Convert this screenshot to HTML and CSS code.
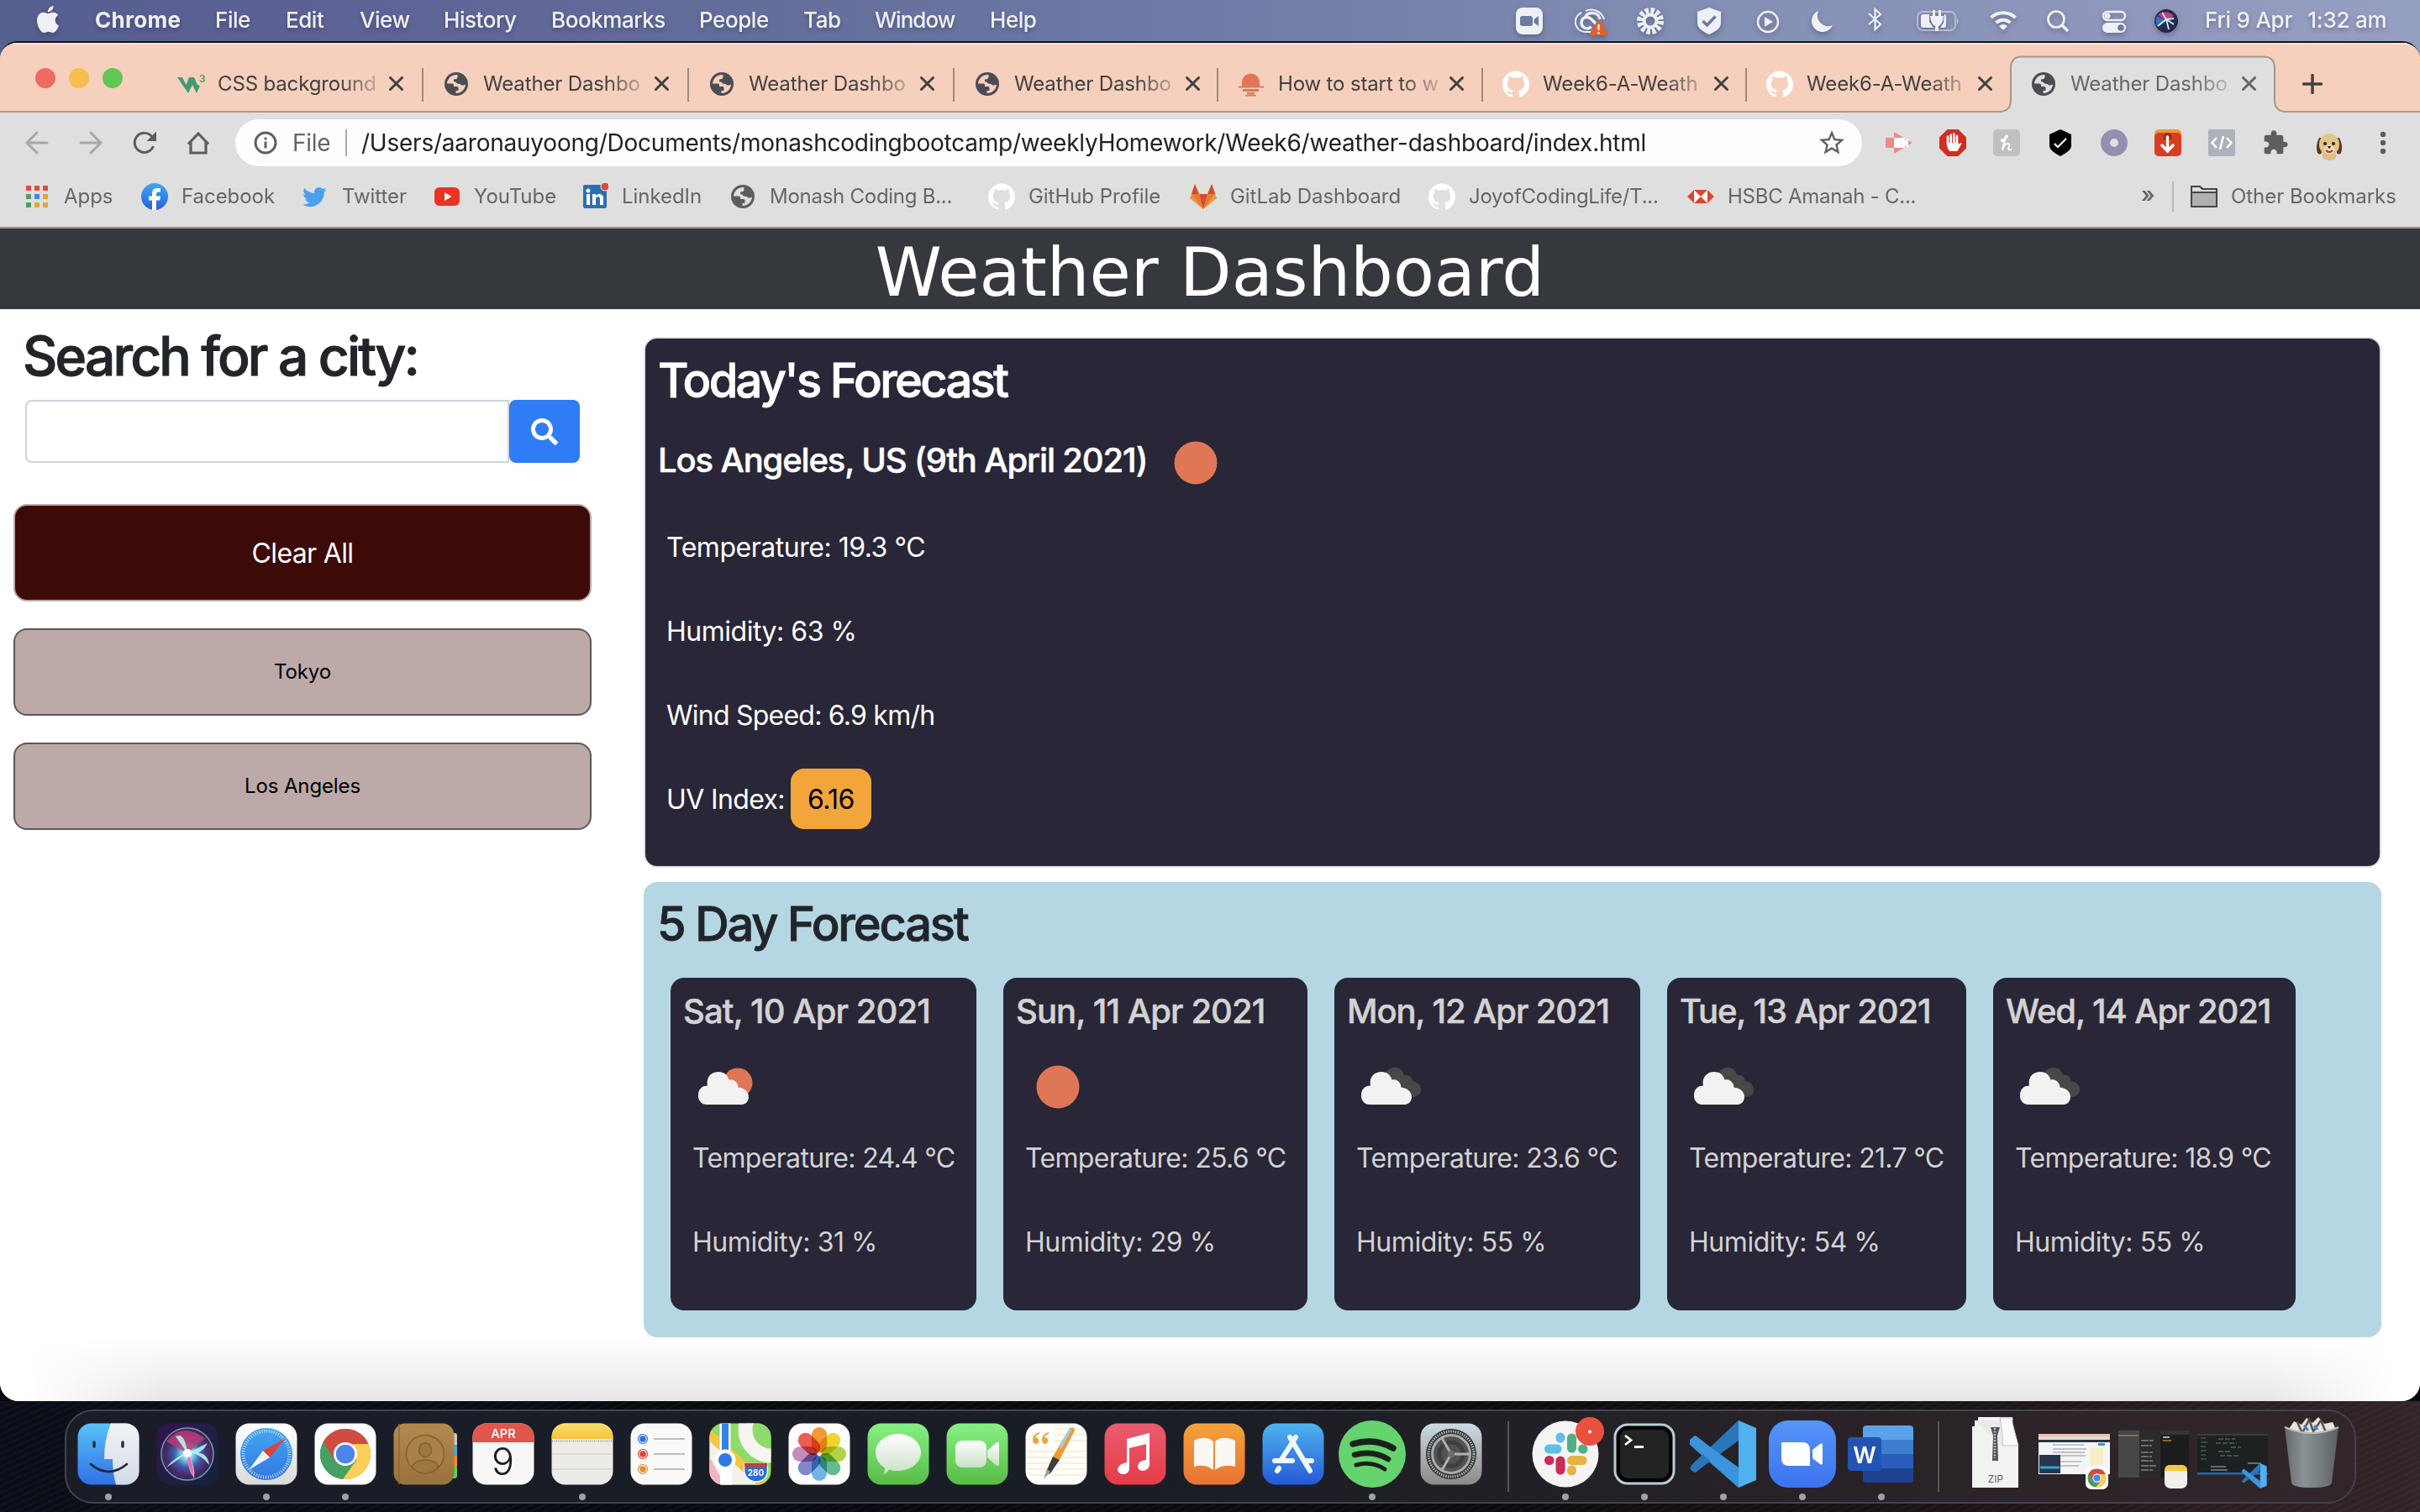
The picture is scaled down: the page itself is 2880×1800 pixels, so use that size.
FILE: index.html
```html
<!DOCTYPE html>
<html lang="en">
<head>
<meta charset="utf-8">
<title>Weather Dashboard</title>
<link rel="stylesheet" href="styles.css">
</head>
<body>
<svg class="defs" aria-hidden="true">
  <defs>
    <symbol id="globe" viewBox="0 0 32 32"><circle cx="16" cy="16" r="14" fill="currentColor"/><path d="M17.500 5C10.500 4.500 5.500 9.500 5 15.500h6.500q1.500 0 1.500 1.500v2h4q1.500 0 1.500 1.500V24h-3v3c6.500 0 11-4.500 11.500-10.500-2 1.500-5 1.500-6.500-.5l-3.500-.5q-1-2.500-4-2.500v-2.500q4 0 4.500-2.500z" class="globe-land"/></symbol>
    <symbol id="github" viewBox="0 0 24 24"><path fill="#fff" d="M12 .297c-6.63 0-12 5.373-12 12 0 5.303 3.438 9.8 8.205 11.385.6.113.82-.258.82-.577 0-.285-.01-1.04-.015-2.04-3.338.724-4.042-1.61-4.042-1.61C4.422 18.07 3.633 17.7 3.633 17.7c-1.087-.744.084-.729.084-.729 1.205.084 1.838 1.236 1.838 1.236 1.07 1.835 2.809 1.305 3.495.998.108-.776.417-1.305.76-1.605-2.665-.3-5.466-1.332-5.466-5.93 0-1.31.465-2.38 1.235-3.22-.135-.303-.54-1.523.105-3.176 0 0 1.005-.322 3.3 1.23.96-.267 1.98-.399 3-.405 1.02.006 2.04.138 3 .405 2.28-1.552 3.285-1.23 3.285-1.23.645 1.653.24 2.873.12 3.176.765.84 1.23 1.91 1.23 3.22 0 4.61-2.805 5.625-5.475 5.92.42.36.81 1.096.81 2.22 0 1.606-.015 2.896-.015 3.286 0 .315.21.69.825.57C20.565 22.092 24 17.592 24 12.297c0-6.627-5.373-12-12-12"/></symbol>
    <symbol id="close" viewBox="0 0 17 17"><path d="M1.500 1.500l14 14M15.500 1.500l-14 14" stroke="currentColor" stroke-width="3" stroke-linecap="round"/></symbol>
    <symbol id="cloud" viewBox="0 0 60 40"><path d="M10 40A10 10 0 0 1 0 29C0 22 4 17.500 11 17.500 9 8 15 1 24 1c7 0 11 4 12.500 9.500C42 9 47 13 47.500 19.500 55 20 60 25 60 31c0 5-4 9-8 9z"/></symbol>
    <symbol id="sun" viewBox="0 0 54 54"><circle cx="27" cy="27" r="25.500" fill="#df7655"/></symbol>
    <symbol id="sun-cloud" viewBox="0 0 72 48"><circle cx="48" cy="19" r="17.500" fill="#df7655"/><use href="#cloud" x="1" y="5" width="60" height="40" fill="#f2f2f2"/></symbol>
    <symbol id="clouds" viewBox="0 0 72 48"><path d="M26 14C28 5 35 0 42 1c6 1 8 5 9 9 6-1 9 2 10 7 6 1 10 5 10 10 0 5-3 8-8 9L40 34z" fill="#484848"/><use href="#cloud" y="5" width="60" height="40" fill="#f2f2f2"/></symbol>
    <symbol id="chrome" viewBox="0 0 60 60"><circle cx="30" cy="30" r="30" fill="#d14c3f"/><path d="M4 15A30 30 0 0 0 27 60L43 37.500H17z" fill="#45a163"/><path d="M56 15A30 30 0 0 1 27 60L43 37.500 39 18z" fill="#fcce5b"/><path d="M4 15L17 37.500 21 18h36l-1-3A30 30 0 0 0 4 15z" fill="#cf4c3e"/><circle cx="30" cy="30" r="14" fill="#fff"/><circle cx="30" cy="30" r="11.200" fill="#4c86ec"/></symbol>
    <symbol id="vscode" viewBox="0 0 80 80"><path d="M0 57l5 5L58 12V0z" fill="#2f7fc4"/><path d="M0 23l6-5L58 67v13L0 29z" fill="#3a93d8"/><path d="M58 0l21 9v62L58 80z" fill="#50b0f0"/><path d="M58 0L2 53q-2 3 0 5l5 4 14-11L58 24z" fill="#2a76b8"/><path d="M58 80L2 27q-2-3 0-5l5-4 14 11 37 27z" fill="#3c95dc"/></symbol>
    <linearGradient id="g-finder" x2="0" y2="1"><stop stop-color="#5ac3f7"/><stop offset="1" stop-color="#2f6fe8"/></linearGradient>
    <linearGradient id="g-finder-r" x2="0" y2="1"><stop stop-color="#f1f3f6"/><stop offset="1" stop-color="#d3dae8"/></linearGradient>
    <linearGradient id="g-white" x2="0" y2="1"><stop stop-color="#fff"/><stop offset="1" stop-color="#dadada"/></linearGradient>
    <linearGradient id="g-pearl" x2="0" y2="1"><stop stop-color="#fff"/><stop offset="1" stop-color="#c9dfc6"/></linearGradient>
    <linearGradient id="g-green" x2="0" y2="1"><stop stop-color="#86f083"/><stop offset="1" stop-color="#58bd45"/></linearGradient>
    <linearGradient id="g-blue" x2="0" y2="1"><stop stop-color="#4fb4f0"/><stop offset="1" stop-color="#2559d6"/></linearGradient>
    <linearGradient id="g-safari" x2="0" y2="1"><stop stop-color="#44a7ef"/><stop offset="1" stop-color="#3277e4"/></linearGradient>
    <linearGradient id="g-orange" x2="0" y2="1"><stop stop-color="#f3a23c"/><stop offset="1" stop-color="#e97336"/></linearGradient>
    <linearGradient id="g-red" x2="0" y2="1"><stop stop-color="#ea5c70"/><stop offset="1" stop-color="#e53c47"/></linearGradient>
    <linearGradient id="g-zoom" x2="0" y2="1"><stop stop-color="#5595f8"/><stop offset="1" stop-color="#3d73ee"/></linearGradient>
    <linearGradient id="g-brown" x2="0" y2="1"><stop stop-color="#b38a4e"/><stop offset="1" stop-color="#99713d"/></linearGradient>
    <linearGradient id="g-yellow" x2="0" y2="1"><stop stop-color="#fae06e"/><stop offset="1" stop-color="#f5c13a"/></linearGradient>
    <linearGradient id="g-steel" x2="0" y2="1"><stop stop-color="#ccdae3"/><stop offset="1" stop-color="#8b8a88"/></linearGradient>
    <linearGradient id="g-bin" x2="1" y2="0"><stop stop-color="#626a6d"/><stop offset=".35" stop-color="#8b9396"/><stop offset=".7" stop-color="#73797c"/><stop offset="1" stop-color="#566064"/></linearGradient>
    <linearGradient id="g-fb" x2="0" y2="1"><stop stop-color="#42a5f5"/><stop offset="1" stop-color="#2462dc"/></linearGradient>
    <radialGradient id="g-siri"><stop stop-color="#fff"/><stop offset=".2" stop-color="#86d8ef"/><stop offset=".5" stop-color="#3f5fa8"/><stop offset=".8" stop-color="#4a2a6c"/><stop offset="1" stop-color="#26304f"/></radialGradient>
    <linearGradient id="g-siribg" x1="0" y1="0" x2="1" y2="1"><stop stop-color="#33134f"/><stop offset=".6" stop-color="#1b2144"/><stop offset="1" stop-color="#12233b"/></linearGradient>
    <clipPath id="tile"><rect x="10.500" y="10.500" width="73" height="73" rx="16"/></clipPath>
  </defs>
</svg>

<header class="menubar">
  <svg class="apple" viewBox="0 0 24 24"><path fill="#eef0f5" d="M12.152 6.896c-.948 0-2.415-1.078-3.96-1.040-2.040.027-3.910 1.183-4.961 3.014-2.117 3.675-.546 9.103 1.519 12.090 1.013 1.454 2.208 3.090 3.792 3.039 1.520-.065 2.090-.987 3.935-.987 1.831 0 2.350.987 3.960.948 1.637-.026 2.676-1.480 3.676-2.948 1.156-1.688 1.636-3.325 1.662-3.415-.039-.013-3.182-1.221-3.220-4.857-.026-3.040 2.480-4.494 2.597-4.559-1.429-2.090-3.623-2.324-4.390-2.376-2-.156-3.675 1.090-4.610 1.090zM15.530 3.830c.843-1.012 1.400-2.427 1.245-3.830-1.207.052-2.662.805-3.532 1.818-.780.896-1.454 2.338-1.273 3.714 1.338.104 2.715-.688 3.559-1.701"/></svg>
  <nav class="menus">
    <b>Chrome</b><span>File</span><span>Edit</span><span>View</span><span>History</span><span>Bookmarks</span><span>People</span><span>Tab</span><span class="tight">Window</span><span>Help</span>
  </nav>
  <div class="status">
    <svg viewBox="0 0 48 48"><rect x="8" y="8" width="32" height="32" rx="8" fill="#eef0f5"/><rect x="13" y="18" width="15" height="12" rx="3" fill="#6c7aa3"/><path d="M29.500 22l5.500-4v12l-5.500-4z" fill="#6c7aa3"/></svg>
    <svg viewBox="0 0 48 48" fill="none" stroke="#eef0f5"><path d="M27 37H19A12 12 0 0 1 14 14M19 12A16 16 0 0 1 41 22" stroke-width="2"/><path d="M26 31c-5 4-12 1-12-5s7-9 12-4l6 6M18 20c4-8 17-7 18 2" stroke-width="3.500"/><path d="M34.500 24q2.500 0 3.500 3l6.500 11q1 3-2 3h-16q-3 0-2-3L31 27q1-3 3.500-3z" fill="#e4602c" stroke="none"/><path d="M34.500 28v7M34.500 37v2.500" stroke="#fff" stroke-width="2"/></svg>
    <svg viewBox="0 0 48 48"><circle cx="24" cy="24" r="11" fill="none" stroke="#eef0f5" stroke-width="10" stroke-dasharray="3.750 2.010"/><circle cx="24" cy="24" r="7.500" fill="none" stroke="#eef0f5" stroke-width="4"/></svg>
    <svg viewBox="0 0 48 48"><path d="M24 8l14 5v13c0 7-7 11-14 14-7-3-14-7-14-14V13z" fill="#eef0f5"/><path d="M16.500 24l5 5 10-10.500" fill="none" stroke="#6c7aa3" stroke-width="3.500"/></svg>
    <svg viewBox="0 0 48 48"><circle cx="24" cy="25" r="12" fill="none" stroke="#eef0f5" stroke-width="2.500"/><path d="M20 19l10 6-10 6z" fill="#eef0f5"/></svg>
    <svg viewBox="0 0 48 48"><path d="M20 12A13 13 0 1 0 37 29 13 13 0 0 1 20 12z" fill="#eef0f5"/></svg>
    <svg viewBox="0 0 48 48"><path d="M16 15l14 13-6.500 6V10l6.500 6-14 12" fill="none" stroke="#eef0f5" stroke-width="2.200"/></svg>
    <svg class="wide" viewBox="0 0 60 48"><rect x="6" y="13" width="45" height="22" rx="6" fill="none" stroke="#ccd2e4" stroke-width="2" opacity=".7"/><path d="M53 20q3 4 0 8z" fill="#ccd2e4" opacity=".8"/><path d="M13 16h7v9l5 7H13q-3 0-3-3V19q0-3 3-3zM38 16q2 0 2 3v10q0 3-3 3h-4l4-6z" fill="#eef0f5"/><path d="M24 11v7h-3q1 10 6 12v6h4v-6q5-2 6-12h-3v-7h-3v7h-4v-7z" fill="#eef0f5"/></svg>
    <svg viewBox="0 0 48 48" fill="none" stroke="#eef0f5" stroke-width="4"><path d="M9.500 20a21 21 0 0 1 29 0M15.500 26a12.500 12.500 0 0 1 17 0"/><path d="M24 35l-5-5q5-4 10 0z" fill="#eef0f5" stroke="none"/></svg>
    <svg viewBox="0 0 48 48" fill="none" stroke="#eef0f5" stroke-width="2.700"><circle cx="22" cy="22" r="9.500"/><path d="M29 29l7 7" stroke-width="3.500"/></svg>
    <svg viewBox="0 0 48 48"><rect x="11" y="13" width="26" height="10" rx="5" fill="none" stroke="#eef0f5" stroke-width="2.400"/><circle cx="16" cy="18" r="3.500" fill="#eef0f5"/><rect x="10" y="26" width="28" height="12" rx="6" fill="#eef0f5"/><circle cx="32" cy="32" r="3.800" fill="#6c7aa3"/></svg>
    <svg viewBox="0 0 48 48"><circle cx="24" cy="24" r="13.500" fill="#28284f" stroke="#22233d" stroke-width="1"/><path d="M14 17q10-8 19 1l-9 6z" fill="#bd3f7f"/><path d="M24 24L13 31q-3-8 0-13z" fill="#356fc1"/><path d="M14 30l10-8-5-8 5 8 9-1-9 1 3 12-3-12 9 6" fill="none" stroke="#baf4f5" stroke-width="1.800"/></svg>
  </div>
  <div class="clock"><span>Fri 9 Apr</span><span>1:32 am</span></div>
</header>

<section class="window">
  <div class="tabstrip">
    <div class="lights"><i class="red"></i><i class="amber"></i><i class="green"></i></div>
    <div class="tab"><svg class="fav" viewBox="0 0 32 32"><path d="M0 8h6l4.500 9L14 8h6l4 9 3 1-4 9-5-10-5 10z" fill="#3f9b71"/><text x="26" y="14" font-size="12" font-weight="600" fill="#3f9b71">3</text></svg><span>CSS background</span><svg class="x"><use href="#close"/></svg></div>
    <div class="tab"><svg class="fav"><use href="#globe"/></svg><span>Weather Dashbo</span><svg class="x"><use href="#close"/></svg></div>
    <div class="tab"><svg class="fav"><use href="#globe"/></svg><span>Weather Dashbo</span><svg class="x"><use href="#close"/></svg></div>
    <div class="tab"><svg class="fav"><use href="#globe"/></svg><span>Weather Dashbo</span><svg class="x"><use href="#close"/></svg></div>
    <div class="tab"><svg class="fav" viewBox="0 0 32 32" fill="#df7655"><path d="M5 20V14a10 10 0 0 1 21 0v6z"/><path d="M1 18.500h15v2H1zM18 18.500h5v2h-5zM25 18.500h6v2h-6zM6 22h19v3H6zM11 26h9v2.500h-9zM9 29h13v1.500H9z"/></svg><span>How to start to w</span><svg class="x"><use href="#close"/></svg></div>
    <div class="tab"><svg class="fav"><use href="#github"/></svg><span>Week6-A-Weath</span><svg class="x"><use href="#close"/></svg></div>
    <div class="tab last"><svg class="fav"><use href="#github"/></svg><span>Week6-A-Weath</span><svg class="x"><use href="#close"/></svg></div>
    <div class="tab active"><svg class="tab-shape" viewBox="0 0 348 70"><path d="M0 67.500h3Q17 67.500 17 53V15Q17 2 30 2h286q14 0 14 13v38q0 14.500 14 14.500h4V70H0z" fill="#dfdfdf"/><path d="M0 67h3Q17 67 17 53V15Q17 1.500 30 1.500h288q13 0 13 13.500v38q0 14 14 14h3" fill="none" stroke="#aa968b" stroke-width="2"/></svg><svg class="fav"><use href="#globe"/></svg><span>Weather Dashbo</span><svg class="x"><use href="#close"/></svg></div>
    <svg class="plus" viewBox="0 0 24 24"><path d="M12 1.500v21M1.500 12h21" stroke="#414141" stroke-width="3.500" stroke-linecap="round"/></svg>
  </div>

  <div class="toolbar">
    <svg viewBox="0 0 64 56" fill="none" stroke="#a7a7a7" stroke-width="3" stroke-linecap="round"><path d="M56 28H33M44 16L32 28l12 12"/></svg>
    <svg viewBox="0 0 64 56" fill="none" stroke="#a7a7a7" stroke-width="3" stroke-linecap="round"><path d="M32 28h23M44 16l12 12-12 12"/></svg>
    <svg viewBox="0 0 64 56"><path d="M54.500 32A11.500 11.500 0 1 1 53 21" fill="none" stroke="#5d5d5d" stroke-width="3"/><path d="M58 14.500V26H46.500z" fill="#5d5d5d"/></svg>
    <svg viewBox="0 0 64 56"><path d="M32 29.500l12-12.500 12 12.500M35 27v13h18V27" fill="none" stroke="#5d5d5d" stroke-width="3.200"/></svg>
    <div class="omnibox">
      <svg class="info" viewBox="0 0 28 28" fill="none" stroke="#5f6164" stroke-width="3"><circle cx="14" cy="14" r="12"/><path d="M14 12.500v8M14 7.500v3"/></svg>
      <span class="scheme">File</span>
      <span class="url">/Users/aaronauyoong/Documents/monashcodingbootcamp/weeklyHomework/Week6/weather-dashboard/index.html</span>
      <svg class="star" viewBox="0 0 24 24"><path fill="#5f6164" d="M22 9.240l-7.190-.620L12 2 9.190 8.630 2 9.240l5.460 4.730L5.820 21 12 17.270 18.180 21l-1.630-7.030L22 9.240zM12 15.400l-3.760 2.270 1-4.280-3.320-2.880 4.380-.380L12 6.100l1.710 4.040 4.380.380-3.320 2.880 1 4.280L12 15.400z"/></svg>
    </div>
    <div class="extensions">
      <svg viewBox="0 0 32 32"><path d="M0 10h10V3l22 13L10 29v-7H0z" fill="#f08a87"/><rect x="10" y="10" width="13" height="12" fill="#fff"/><path d="M21 16l4-5h2v10h-2z" fill="#fff"/></svg>
      <svg viewBox="0 0 32 32"><path d="M9.500 0h13L32 9.500v13L22.500 32h-13L0 22.500v-13z" fill="#d22d21"/><path d="M10 8.500V18M13.700 6.500V18M17.400 5.500V18M21 8v12" stroke="#fff" stroke-width="2.700" stroke-linecap="round"/><path d="M8.700 16h13.700v2l3-2q2 0 0 3l-4 7H12q-3-4-3.300-8z" fill="#fff"/></svg>
      <svg viewBox="0 0 32 32"><rect width="32" height="32" rx="5" fill="#c0c0c0"/><path d="M9 12q6 1 8-4-2-2-3 3l-3 14q2-8 6-8t1 6q0 2 4 1M9 14h6" fill="none" stroke="#fff" stroke-width="2"/></svg>
      <svg viewBox="0 0 32 32"><path d="M16 0l13 6v14q0 5-13 12Q3 25 3 20V6z"/><path d="M9 17l4 4 10-10" fill="none" stroke="#fff" stroke-width="2.200"/></svg>
      <svg viewBox="0 0 32 32"><circle cx="16" cy="16" r="10.500" fill="none" stroke="#9190b0" stroke-width="11"/></svg>
      <svg viewBox="0 0 32 32"><rect width="32" height="20" rx="5" fill="#f19a38"/><rect y="4" width="32" height="28" rx="5" fill="#d83e22"/><circle cx="15.500" cy="9" r="5" fill="#9d2a16"/><path d="M15.500 9v16M9 19l6.500 7 6.500-7" fill="none" stroke="#fff" stroke-width="3.500" stroke-linecap="round"/></svg>
      <svg viewBox="0 0 32 32"><rect width="32" height="32" rx="2" fill="#adb1bc"/><path d="M10 10l-5.500 6 5.500 6M22 10l5.500 6-5.500 6M18 8l-4 16" fill="none" stroke="#fff" stroke-width="2.500"/></svg>
      <svg viewBox="0 0 24 24"><path fill="#5d5d5d" d="M20.500 11H19V7c0-1.100-.9-2-2-2h-4V3.500C13 2.120 11.880 1 10.500 1S8 2.120 8 3.500V5H4c-1.100 0-1.990.9-1.990 2v3.800H3.500c1.490 0 2.700 1.210 2.700 2.700s-1.210 2.700-2.700 2.700H2V20c0 1.100.9 2 2 2h3.800v-1.500c0-1.490 1.210-2.700 2.700-2.700 1.490 0 2.700 1.210 2.700 2.700V22H17c1.100 0 2-.9 2-2v-4h1.500c1.380 0 2.500-1.120 2.500-2.500S21.880 11 20.500 11z"/></svg>
      <svg class="dog" viewBox="0 0 36 36"><path d="M10 27h16v5q-8 6-16 0z" fill="#dfbd83"/><path d="M6 8Q1 18 4 26q3 3 5 0V8zM30 8q5 10 2 18-3 3-5 0V8z" fill="#5d3a1e"/><ellipse cx="18" cy="16" rx="12" ry="13" fill="#e3c48c"/><ellipse cx="18" cy="22" rx="6.500" ry="5.500" fill="#f0dcb4"/><circle cx="13" cy="15" r="2" fill="#2a1c14"/><circle cx="23" cy="15" r="2" fill="#2a1c14"/><path d="M15.500 18h5l-2.500 3z" fill="#2a1c14"/><path d="M14 23q4 4 8 0" stroke="#a33" stroke-width="2" fill="none"/></svg>
      <svg viewBox="0 0 32 32" fill="#5d5d5d"><circle cx="16" cy="6" r="3.200"/><circle cx="16" cy="16" r="3.200"/><circle cx="16" cy="26" r="3.200"/></svg>
    </div>
  </div>

  <div class="bookmarks">
    <div><svg viewBox="0 0 32 32"><path d="M3 3h6v6H3zM13 3h6v6h-6zM23 3h6v6h-6z" fill="#e6493c"/><path d="M3 13h6v6H3zM3 23h6v6H3z" fill="#559b61"/><path d="M13 13h6v6h-6z" fill="#3f85ee"/><path d="M23 13h6v6h-6zM13 23h6v6h-6zM23 23h6v6h-6z" fill="#e8a33a"/></svg>Apps</div>
    <div><svg viewBox="0 0 32 32"><circle cx="16" cy="16" r="16" fill="url(#g-fb)"/><path d="M13 32V20.500H9v-5h4V12q0-6 6-6h4v4.500h-2.500q-2.500 0-2.500 2.500v2.500h5l-.8 5H18V32z" fill="#fff"/></svg>Facebook</div>
    <div><svg viewBox="-1 -2 27 27"><path fill="#4aa0ec" d="M23.953 4.570a10 10 0 01-2.825.775 4.958 4.958 0 002.163-2.723c-.951.555-2.005.959-3.127 1.184a4.920 4.920 0 00-8.384 4.482C7.690 8.095 4.067 6.130 1.640 3.162a4.822 4.822 0 00-.666 2.475c0 1.710.870 3.213 2.188 4.096a4.904 4.904 0 01-2.228-.616v.060a4.923 4.923 0 003.946 4.827 4.996 4.996 0 01-2.212.085 4.936 4.936 0 004.604 3.417 9.867 9.867 0 01-6.102 2.105c-.390 0-.779-.023-1.170-.067a13.995 13.995 0 007.557 2.209c9.053 0 13.998-7.496 13.998-13.985 0-.210 0-.420-.015-.630A9.935 9.935 0 0024 4.590z"/></svg>Twitter</div>
    <div><svg viewBox="0 0 32 32"><rect x="1" y="5" width="30" height="22" rx="6" fill="#eb3323"/><path d="M13 11l8.500 5-8.500 5z" fill="#fff"/></svg>YouTube</div>
    <div><svg viewBox="0 0 32 32"><rect x="2" y="2" width="28" height="28" rx="2" fill="#2c6fb0"/><path d="M6 13h4v13H6zM13 13h4v2q5-5 9 1v10h-4v-8q-2-4-5 0v8h-4z" fill="#fff"/><circle cx="8" cy="9" r="2.500" fill="#fff"/><circle cx="28" cy="4" r="5.500" fill="#dfdfdf"/><circle cx="28" cy="4" r="4.500" fill="#e0493c"/></svg>LinkedIn</div>
    <div class="snug"><svg><use href="#globe"/></svg>Monash Coding B...</div>
    <div><svg><use href="#github"/></svg>GitHub Profile</div>
    <div><svg viewBox="0 0 32 32"><path d="M0 18L6 1l5 12h10l5-12 6 17-16 13z" fill="#ec9a3c"/><path d="M11 13h10l-5 18zM6 1l5 12H2zM26 1l-5 12h9z" fill="#d64a31"/><path d="M2 13h9l5 18zM30 13h-9l-5 18z" fill="#e77b35"/></svg>GitLab Dashboard</div>
    <div class="snug"><svg><use href="#github"/></svg>JoyofCodingLife/T...</div>
    <div class="snug"><svg viewBox="0 0 32 32"><path d="M8 8h16l8 8-8 8H8l-8-8z" fill="#fff"/><path d="M8 8v16l-8-8zM24 8v16l8-8zM8 8h16l-8 8zM8 24h16l-8-8z" fill="#dd4430"/></svg>HSBC Amanah - C...</div>
    <div class="more">»</div>
    <div class="other"><svg viewBox="0 0 34 32"><path d="M2 4h10l3 3h17v21H2z" fill="#b0b0b0" stroke="#454545" stroke-width="2" stroke-linejoin="round"/><path d="M2 4h10l3 3h17v4H2z" fill="#dfdfdf" stroke="#454545" stroke-width="2"/></svg>Other Bookmarks</div>
  </div>

  <div class="page">
    <h1 class="title">Weather Dashboard</h1>
    <main class="content">
      <aside class="sidebar">
        <h2>Search for a city:</h2>
        <div class="search"><input type="text" aria-label="City"><button aria-label="Search"><svg viewBox="0 0 512 512"><path fill="#fff" d="M505 442.700L405.300 343c-4.500-4.500-10.600-7-17-7H372c27.600-35.300 44-79.700 44-128C416 93.100 322.900 0 208 0S0 93.100 0 208s93.100 208 208 208c48.300 0 92.700-16.400 128-44v16.300c0 6.400 2.500 12.500 7 17l99.700 99.700c9.400 9.400 24.600 9.400 33.900 0l28.300-28.300c9.400-9.400 9.400-24.600.1-34zM208 336c-70.700 0-128-57.200-128-128 0-70.700 57.200-128 128-128 70.700 0 128 57.200 128 128 0 70.700-57.200 128-128 128z"/></svg></button></div>
        <button class="clear">Clear All</button>
        <button class="city">Tokyo</button>
        <button class="city">Los Angeles</button>
      </aside>
      <div class="forecasts">
        <section class="today">
          <h3>Today's Forecast</h3>
          <h4>Los Angeles, US (9th April 2021)<svg><use href="#sun"/></svg></h4>
          <p>Temperature: 19.3 °C</p>
          <p>Humidity: 63 %</p>
          <p class="wind">Wind Speed: 6.9 km/h</p>
          <p class="uv-row">UV Index: <span class="uv">6.16</span></p>
        </section>
        <section class="week">
          <h3>5 Day Forecast</h3>
          <div class="days">
            <article><h4>Sat, 10 Apr 2021</h4><svg><use href="#sun-cloud"/></svg><p>Temperature: 24.4 °C</p><p>Humidity: 31 %</p></article>
            <article><h4>Sun, 11 Apr 2021</h4><svg class="sunny"><use href="#sun"/></svg><p>Temperature: 25.6 °C</p><p>Humidity: 29 %</p></article>
            <article><h4>Mon, 12 Apr 2021</h4><svg><use href="#clouds"/></svg><p>Temperature: 23.6 °C</p><p>Humidity: 55 %</p></article>
            <article><h4>Tue, 13 Apr 2021</h4><svg><use href="#clouds"/></svg><p>Temperature: 21.7 °C</p><p>Humidity: 54 %</p></article>
            <article><h4>Wed, 14 Apr 2021</h4><svg><use href="#clouds"/></svg><p>Temperature: 18.9 °C</p><p>Humidity: 55 %</p></article>
          </div>
        </section>
      </div>
    </main>
  </div>
</section>

<footer class="desktop">
  <div class="dock">
    <div class="app open"><svg viewBox="0 0 94 94"><g clip-path="url(#tile)"><path d="M10 10h74v74H10z" fill="url(#g-finder)"/><path d="M50 10Q42 30 42 53h10q0 16 4 31h28V10z" fill="url(#g-finder-r)"/></g><path d="M30 33v5M64 33v5" stroke="#22303f" stroke-width="3.500" stroke-linecap="round"/><path d="M26 59q21 18 43 0" fill="none" stroke="#1c2633" stroke-width="2.600" stroke-linecap="round"/></svg></div>
    <div class="app"><svg viewBox="0 0 94 94"><rect x="10.500" y="10.500" width="73" height="73" rx="16" fill="url(#g-siribg)"/><circle cx="47" cy="47" r="31" fill="url(#g-siri)" stroke="#8b93ac" stroke-width="1.500"/><path d="M22 32Q40 8 68 28L47 46z" fill="#c13b74" opacity=".8"/><path d="M47 46L22 63Q32 50 47 46zM47 46q24-5 26 14Q60 44 47 46zM47 46Q44 20 33 26zM47 46q10 15 8 30Q47 66 47 46zM47 46l24-12q-8 16-24 12z" fill="#b3f4ef" opacity=".9"/><path d="M47 46q7 10 8 30-8-12-8-30z" fill="#ef6aa8"/><circle cx="47" cy="46" r="5" fill="#fff"/></svg></div>
    <div class="app open"><svg viewBox="0 0 94 94"><rect x="10.500" y="10.500" width="73" height="73" rx="16" fill="url(#g-white)"/><circle cx="47" cy="47" r="31" fill="url(#g-safari)"/><circle cx="47" cy="47" r="27.500" fill="none" stroke="#c6e2fa" stroke-width="4" stroke-dasharray="1 1.880"/><path d="M70 28L43 43l8 8z" fill="#e04434"/><path d="M26 66l17-23 8 8z" fill="#eef2f5"/></svg></div>
    <div class="app open"><svg viewBox="0 0 94 94"><rect x="10.500" y="10.500" width="73" height="73" rx="16" fill="#fff"/><use href="#chrome" x="17" y="17" width="60" height="60"/></svg></div>
    <div class="app"><svg viewBox="0 0 94 94"><rect x="76" y="22" width="10" height="18" rx="3" fill="#c8c8c8"/><rect x="76" y="36" width="10" height="14" fill="#49a6dd"/><rect x="76" y="49" width="10" height="13" fill="#ef8b32"/><rect x="76" y="61" width="10" height="15" rx="3" fill="#5fce5d"/><rect x="10.500" y="10.500" width="72" height="73" rx="14" fill="url(#g-brown)"/><path d="M17 11v72" stroke="#8f6a38" stroke-width="1.500"/><g fill="#9d7740" stroke="#856131" stroke-width="1.600"><circle cx="48" cy="47" r="22.500" fill="#a8824a"/><ellipse cx="48" cy="42" rx="7.500" ry="8.500"/><path d="M32 62q4-8 16-8t16 8q-6 8-16 8t-16-8z"/></g></svg></div>
    <div class="app"><svg viewBox="0 0 94 94"><g clip-path="url(#tile)"><path d="M10 10h74v74H10z" fill="#f7f7f6"/><path d="M10 10h74v23H10z" fill="#e2554a"/></g><text x="47" y="28" font-size="14.500" font-weight="600" fill="#fff" text-anchor="middle">APR</text><text x="46.500" y="72" font-size="45" font-weight="300" fill="#1d1d1f" text-anchor="middle">9</text></svg></div>
    <div class="app open"><svg viewBox="0 0 94 94"><g clip-path="url(#tile)"><path d="M10 10h74v74H10z" fill="#ecebe7"/><path d="M10 10h74v19H10z" fill="url(#g-yellow)"/></g><path d="M11 31.500h72" stroke="#8d8b85" stroke-width="1.500" stroke-dasharray="1 1.500"/><path d="M11 47h72M11 65h72" stroke="#d3d2ce" stroke-width="1.500"/></svg></div>
    <div class="app"><svg viewBox="0 0 94 94"><rect x="10.500" y="10.500" width="73" height="73" rx="16" fill="#f9f9f8"/><path d="M38 29h37M38 47h37M38 65h37" stroke="#bdbdbb" stroke-width="2"/><g stroke-width="1.200" fill="none"><circle cx="25" cy="29" r="5.500" stroke="#2f6fe6"/><circle cx="25" cy="47" r="5.500" stroke="#e04338"/><circle cx="25" cy="65" r="5.500" stroke="#e68f2e"/></g><circle cx="25" cy="29" r="3.800" fill="#2f6fe6"/><circle cx="25" cy="47" r="3.800" fill="#e04338"/><circle cx="25" cy="65" r="3.800" fill="#e68f2e"/></svg></div>
    <div class="app"><svg viewBox="0 0 94 94"><g clip-path="url(#tile)"><path d="M10 10h74v74H10z" fill="#8fdb6a"/><path d="M10 24L84 92H10z" fill="#f3f1ea"/><circle cx="84" cy="18" r="31" fill="#8fdb6a" stroke="#f6f4ee" stroke-width="17"/><path d="M8 22l72 66" stroke="#f6c544" stroke-width="11"/><path d="M10 50l20 36H8z" fill="#f0b5c2"/><path d="M30 50v36" stroke="#fff" stroke-width="14"/><path d="M29 10v40" stroke="#fff" stroke-width="13"/><path d="M29 10v38" stroke="#2f83ea" stroke-width="8"/></g><circle cx="29" cy="54" r="12.500" fill="#fff"/><circle cx="29" cy="54" r="8" fill="#2f78e6"/><path d="M52 59h27q2 12-3 17-4 4-10 4t-10-4q-6-5-4-17z" fill="#2c6fd6" stroke="#fff" stroke-width="1.300"/><path d="M52 58h27v4H52z" fill="#cf3b35"/><text x="65.500" y="73" font-size="10" font-weight="700" fill="#fff" text-anchor="middle">280</text></svg></div>
    <div class="app"><svg viewBox="0 0 94 94"><rect x="10.500" y="10.500" width="73" height="73" rx="16" fill="#fdfdfd"/><g class="petals"><rect x="38" y="15" width="18" height="30" rx="9" fill="#f19a37"/><rect x="38" y="15" width="18" height="30" rx="9" fill="#f0d532" transform="rotate(45 47 47)"/><rect x="38" y="15" width="18" height="30" rx="9" fill="#b5d24a" transform="rotate(90 47 47)"/><rect x="38" y="15" width="18" height="30" rx="9" fill="#66b98a" transform="rotate(135 47 47)"/><rect x="38" y="15" width="18" height="30" rx="9" fill="#72b5e4" transform="rotate(180 47 47)"/><rect x="38" y="15" width="18" height="30" rx="9" fill="#7f87c8" transform="rotate(225 47 47)"/><rect x="38" y="15" width="18" height="30" rx="9" fill="#c58bb9" transform="rotate(270 47 47)"/><rect x="38" y="15" width="18" height="30" rx="9" fill="#ea5f4d" transform="rotate(315 47 47)"/></g></svg></div>
    <div class="app"><svg viewBox="0 0 94 94"><rect x="10.500" y="10.500" width="73" height="73" rx="16" fill="url(#g-green)"/><path d="M47 23c15 0 27 10 27 22S62 67 47 67c-4 0-8-.5-11-1.500-2 3-4 5-7 6 2-3 2-5 2-8-7-4-11-11-11-18.500C20 33 32 23 47 23z" fill="url(#g-pearl)"/></svg></div>
    <div class="app"><svg viewBox="0 0 94 94"><rect x="10.500" y="10.500" width="73" height="73" rx="16" fill="url(#g-green)"/><rect x="21" y="31" width="37" height="32" rx="8" fill="url(#g-pearl)"/><path d="M59 43l11-10q3-1 3 2v24q0 3-3 2L59 51z" fill="url(#g-pearl)"/></svg></div>
    <div class="app"><svg viewBox="0 0 94 94"><rect x="10.500" y="10.500" width="73" height="73" rx="16" fill="#fffefb"/><path d="M45 17h30M45 24h37M45 31h38M12 44h71M12 51h71M12 58h71M12 65h71M14 72h67" stroke="#f6e0bd" stroke-width="1.200"/><path d="M27 21q-8 2-8 9 0 5 4 5 3 0 3-4t-4-4q1-3 5-4zM38 21q-8 2-8 9 0 5 4 5 3 0 3-4t-4-4q1-3 5-4z" fill="#eda63a"/><path d="M63 16q6-2 6 3L51 54l-8-4z" fill="#eb9b33"/><path d="M64 17L52 40" stroke="#9bd0ec" stroke-width="3"/><path d="M43 50l8 4-11 16q-5 2-5-2z" fill="#3d3d3f"/><path d="M36 65l4 3-8 9z" fill="#9b9b9b"/></svg></div>
    <div class="app"><svg viewBox="0 0 94 94"><rect x="10.500" y="10.500" width="73" height="73" rx="16" fill="url(#g-red)"/><path d="M37 29l27-7v38q-1 7-9 7-5-1-5-6 1-6 10-7V35l-20 5v25q-1 6-8 6-6-1-6-6 1-6 11-8z" fill="#fff"/></svg></div>
    <div class="app"><svg viewBox="0 0 94 94"><rect x="10.500" y="10.500" width="73" height="73" rx="16" fill="url(#g-orange)"/><path d="M46 32q-9-8-23-1v31q13-4 23 4zM48 32q9-8 24-1v31q-14-4-24 4z" fill="#fbf7f2"/></svg></div>
    <div class="app"><svg viewBox="0 0 94 94"><rect x="10.500" y="10.500" width="73" height="73" rx="16" fill="url(#g-blue)"/><g stroke="#f3f8ff" stroke-width="6" stroke-linecap="round"><path d="M50 27L32 55M43 27l24 40M25 55h21M60 55h9M30 64l-2 3"/></g></svg></div>
    <div class="app open"><svg viewBox="0 0 94 94"><circle cx="47" cy="47" r="40" fill="#65d46e"/><g fill="none" stroke="#17231a" stroke-linecap="round"><path d="M24 35q26-8 48 5" stroke-width="7.500"/><path d="M26 48q22-6 40 5" stroke-width="6.500"/><path d="M28 60q18-5 34 5" stroke-width="5"/></g></svg></div>
    <div class="app"><svg viewBox="0 0 94 94"><rect x="10.500" y="10.500" width="73" height="73" rx="16" fill="url(#g-steel)"/><circle cx="47" cy="47" r="30" fill="#343638"/><circle cx="47" cy="47" r="27" fill="none" stroke="#b5b5b5" stroke-width="3" stroke-dasharray="1.500 1.300"/><circle cx="47" cy="47" r="22.500" fill="#515355" stroke="#a9abac" stroke-width="3"/><circle cx="47" cy="47" r="14" fill="none" stroke="#3c3e40" stroke-width="5"/><path d="M47 47h22M47 47L36 28M47 47L36 66" stroke="#aeb0b1" stroke-width="3"/><circle cx="47" cy="47" r="4" fill="#6b6d6e"/></svg></div>
    <i class="divider"></i>
    <div class="app open"><svg viewBox="0 0 94 94"><circle cx="47" cy="47" r="39.500" fill="#f5f4f5"/><g stroke-width="11" stroke-linecap="round"><path d="M27.500 41H37" stroke="#5dc0ea"/><path d="M41 27v1" stroke="#5dc0ea"/><path d="M54.500 28v12" stroke="#4fae82"/><path d="M68 41h-.5" stroke="#4fae82"/><path d="M41 55v11" stroke="#ca2c57"/><path d="M27.500 54.500h.5" stroke="#ca2c57"/><path d="M54.500 54.500h12.500M54.500 67v-1" stroke="#e4b343"/></g><circle cx="76" cy="20" r="17" fill="#e8503f"/><circle cx="76" cy="20.500" r="2" fill="#fff"/></svg></div>
    <div class="app open"><svg viewBox="0 0 94 94"><rect x="12" y="12" width="70" height="70" rx="15" fill="#000" stroke="#b9ced4" stroke-width="3"/><rect x="18" y="18" width="58" height="58" rx="9" fill="#232323"/><path d="M24 25l7 5.500-7 5.500M35 38.500h11" fill="none" stroke="#fff" stroke-width="2.800"/></svg></div>
    <div class="app open"><svg viewBox="0 0 94 94"><use href="#vscode" x="7" y="7" width="80" height="80"/></svg></div>
    <div class="app open"><svg viewBox="0 0 94 94"><rect x="7" y="7" width="80" height="80" rx="23" fill="url(#g-zoom)"/><path d="M22 33h25q9 0 9 9v19H31q-9 0-9-9z" fill="#fff"/><path d="M59 42l9-7q3-2 3 2v20q0 4-3 2l-9-7z" fill="#fff"/></svg></div>
    <div class="app open"><svg viewBox="0 0 94 94"><g><path d="M25 17q0-4 4-4h52q4 0 4 4v13H25z" fill="#5aa3e8"/><path d="M25 30h60v17H25z" fill="#3c7dd0"/><path d="M25 47h60v17H25z" fill="#2a5dbb"/><path d="M25 64h60v13q0 4-4 4H29q-4 0-4-4z" fill="#1f4390"/></g><rect x="7" y="27" width="40" height="40" rx="4" fill="#2354b4"/><text x="27" y="57.500" font-size="27" font-weight="600" fill="#fff" text-anchor="middle">W</text></svg></div>
    <i class="divider"></i>
    <div class="app"><svg viewBox="0 0 94 94"><path d="M26 3h41v34h7v50H19V14h3V7h4z" fill="#f2f2f1"/><path d="M22 7h30l16 30-14 0z" fill="#e9e9e8"/><path d="M52 4h15v6l7 27H55q1-15-3-33z" fill="#fafafa" stroke="#c4c4c4"/><path d="M41 15h11l-3 10 1 30h-7l1-30z" fill="#515356"/><path d="M46 16v36" stroke="#b6b9bc" stroke-width="2.500" stroke-dasharray="2 1.500"/><text x="47" y="81" font-size="12" fill="#5a5a5a" text-anchor="middle">ZIP</text></svg></div>
    <div class="app"><svg viewBox="0 0 94 94"><rect x="4" y="23" width="85" height="48" fill="#f3f4f6"/><path d="M4 23h85v3H4z" fill="#f1bfa9"/><path d="M4 26h85v4H4z" fill="#dcdcdc"/><path d="M4 30h85v3H4z" fill="#2a3442"/><path d="M21 36h37M21 41h40M21 45h38M21 49h39M30 56h25M30 61h22" stroke="#aeb4ba" stroke-width="1.500"/><rect x="5" y="48" width="25" height="22" fill="#27364a"/><path d="M6 63h23" stroke="#3aa0d8" stroke-width="3"/><rect x="65" y="40" width="16" height="20" fill="#f7eec8"/><rect x="75" y="34" width="8" height="3" fill="#3a93d8"/><rect x="60" y="62" width="27" height="27" rx="7" fill="#fff"/><use href="#chrome" x="62.500" y="64.500" width="22" height="22"/></svg></div>
    <div class="app"><svg viewBox="0 0 94 94"><rect x="5" y="19" width="84" height="56" fill="#1d1d1e"/><path d="M5 19h25v56H5z" fill="#474747"/><path d="M30 19h25v56H30z" fill="#2b2b2c"/><path d="M55 19h34v5H55z" fill="#353536"/><path d="M5 25h24" stroke="#7d7355" stroke-width="2"/><path d="M32 31h15M32 37h13M32 45h14M32 50h13M32 55h14M32 61h18M32 66h14" stroke="#6d6d6d" stroke-width="2" stroke-dasharray="9 1"/><path d="M58 27h8" stroke="#ddd" stroke-width="1.500"/><path d="M58 31h10" stroke="#a88431" stroke-width="1.500"/><rect x="60" y="60" width="27" height="28" rx="7" fill="#f0efec"/><path d="M60 67q0-7 7-7h13q7 0 7 7z" fill="#f5c640"/></svg></div>
    <div class="app"><svg viewBox="0 0 94 94"><rect x="5" y="23" width="84" height="48" fill="#1c2122"/><path d="M5 23h84v2H5z" fill="#3a3d3e"/><path d="M5 69h84v2.500H5z" fill="#2468b4"/><path d="M9 28h6M9 33h8M9 38h6M9 43h7M9 48h6M9 53h7" stroke="#4c5254" stroke-width="1.500"/><path d="M30 29h20M27 34h25M45 39h12M30 44h16M32 49h24" stroke="#4a6650" stroke-width="1.300" stroke-dasharray="6 2"/><path d="M21 62h18M21 66h20M65 58h16" stroke="#80868a" stroke-width="1.300"/><use href="#vscode" x="58" y="58" width="30" height="30"/></svg></div>
    <div class="app"><svg viewBox="0 0 94 94"><path d="M18 20l8-12 9 4 6-8 7 6 7-7 7 8 10-2 5 11-10 6H26z" fill="#e6e4e0"/><path d="M30 9l6 13 8-16 5 14 9-13 6 14" fill="none" stroke="#5a504c" stroke-width="2.500"/><path d="M38 13l5 6M50 13l4 5" stroke="#418bc4" stroke-width="3"/><path d="M15 15q32 14 64 0l-8 66q-1 6-24 6t-24-6z" fill="url(#g-bin)"/><path d="M15 15q32 14 64 0" fill="none" stroke="#b9bfc1" stroke-width="2"/></svg></div>
  </div>
</footer>
</body>
</html>
```
FILE: styles.css
```css
* { box-sizing: border-box; }
html, body { margin: 0; height: 1800px; }
body {
  width: 2880px;
  display: flex;
  flex-direction: column;
  overflow: hidden;
  font-family: Inter, "Liberation Sans", sans-serif;
  background: linear-gradient(90deg, #55608f 0%, #5d6094 12%, #646d9a 30%, #707aa6 50%, #8490b5 72%, #9298bd 90%, #959fc0 100%) 0 0 / 100% 90px no-repeat, #08090f;
}
.defs { position: absolute; width: 0; height: 0; }
svg { display: block; flex: none; }
h1, h2, h3, h4, p { margin: 0; font-weight: 500; }
button { font: inherit; padding: 0; }

/* Menu bar */
.menubar {
  height: 49px;
  display: flex;
  align-items: center;
  color: #eef0f5;
  font-size: 26px;
  font-weight: 500;
  line-height: 32px;
  text-shadow: 0 3px 5px rgba(30, 35, 70, .35);
}
.menubar svg { filter: drop-shadow(0 3px 3px rgba(30, 35, 70, .35)); }
.apple { width: 32px; height: 32px; margin: 0 41px 3px; }
.menus {
  display: grid;
  grid-template-columns: 143px 84px 88px 100px 128px 176px 124px 85px 137px 100px;
  padding-bottom: 2px;
  margin-left: -1px;
  letter-spacing: -.017em;
}
.menus b { letter-spacing: .012em; }
.menus .tight { letter-spacing: -.038em; }
.status {
  flex: 1;
  padding-left: 518px;
  display: grid;
  grid-template-columns: 72px 72px 70px 70px 64px 64px 68px 84px 65px 67px 62px 48px;
}
.status svg { width: 48px; height: 48px; }
.status .wide { width: 60px; }
.clock { display: flex; gap: 18px; width: 256px; padding-bottom: 2px; white-space: nowrap; letter-spacing: -.009em; }

/* Browser window */
.window {
  height: 1619px;
  display: flex;
  flex-direction: column;
  border-top: 2px solid #131218;
  border-radius: 21px 21px 22px 22px;
  background: #fff;
  overflow: hidden;
}
.tabstrip {
  height: 83px;
  flex: none;
  display: grid;
  grid-template-columns: 188px 316px 316px 316px 314px 315px 314px 314px 314px 100px;
  background: #f6d0bd;
  border-top: 2px solid #fbe2d6;
  border-bottom: 2px solid #aa968b;
  --land: #f6d0bd;
}
.lights { display: flex; gap: 16px; padding: 28px 0 0 42px; }
.lights i { width: 24px; height: 24px; border-radius: 50%; }
.red { background: #ed6b5f; }
.amber { background: #f5be4f; }
.green { background: #62c655; }
.globe-land { fill: var(--land); }
.tab {
  position: relative;
  display: flex;
  align-items: center;
  padding: 14px 0 0 23px;
  color: #414141;
  font-size: 24px;
  line-height: 30px;
  letter-spacing: -.006em;
}
.tab .fav { width: 32px; height: 32px; color: #4b4d54; overflow: visible; position: relative; }
.tab span {
  width: 196px;
  margin: 0 8px 0 16px;
  white-space: nowrap;
  mask-image: linear-gradient(90deg, #000 145px, transparent 205px);
}
.tab .x { width: 17px; height: 17px; }
.tab:not(.last):not(.active)::after {
  content: "";
  position: absolute;
  right: 0;
  top: 28px;
  width: 2px;
  height: 40px;
  background: #9d8a80;
}
.tab.active { color: #666; --land: #dfdfdf; }
.tab-shape { position: absolute; left: -17px; top: 13px; width: 348px; height: 70px; }
.tab.active > * { z-index: 1; }
.tab.active .tab-shape { z-index: 0; }
.plus { width: 24px; height: 24px; margin: 35px 0 0 33px; }

.toolbar {
  height: 72px;
  flex: none;
  display: flex;
  align-items: center;
  background: #dfdfdf;
}
.toolbar > svg { width: 64px; height: 56px; }
.omnibox {
  flex: none;
  width: 1936px;
  height: 56px;
  margin-left: 24px;
  padding-left: 22px;
  display: flex;
  align-items: center;
  border-radius: 28px;
  background: #fdfdfd;
  font-size: 28px;
  line-height: 36px;
  white-space: nowrap;
}
.info { width: 28px; height: 28px; }
.scheme { width: 65px; margin-left: 18px; border-right: 2px solid #aaa; line-height: 32px; color: #666; letter-spacing: -.01em; }
.url { width: 1732px; margin-left: 17px; color: #202124; letter-spacing: -.0082em; }
.star { width: 36px; height: 36px; }
.extensions { display: grid; grid-template-columns: repeat(9, 64px) 36px; margin-left: 28px; align-items: center; }
.extensions svg { width: 32px; height: 32px; }
.extensions .dog { width: 36px; height: 36px; margin: 8px 0 0 -2px; }

.bookmarks {
  height: 66px;
  flex: none;
  display: grid;
  grid-template-columns: 140px 191px 157px 176px 176px 308px 240px 284px 308px 540px 37px 1fr;
  align-content: center;
  padding: 0 0 9px 28px;
  background: #dfdfdf;
  border-bottom: 2px solid #969696;
  color: #666;
  font-size: 24px;
  line-height: 32px;
  white-space: nowrap;
  letter-spacing: -.002em;
  --land: #dfdfdf;
}
.bookmarks div { display: flex; align-items: center; gap: 16px; }
.bookmarks svg { width: 32px; height: 32px; color: #5d5d5d; }
.bookmarks .snug { letter-spacing: -.011em; }
.bookmarks .more { font-size: 26px; font-weight: 600; padding-bottom: 4px; }
.bookmarks .other { border-left: 2px solid #b9b9b9; padding-left: 19px; gap: 15px; }
.bookmarks .other svg { width: 34px; }

/* Page */
.page {
  flex: 1;
  background: #fff;
  position: relative;
}
.page::after {
  content: "";
  position: absolute;
  left: 0;
  right: 0;
  bottom: 0;
  height: 76px;
  background: linear-gradient(#e6e6e600, #f2f2f2 55%, #e7e7e7);
  mask-image: linear-gradient(90deg, transparent 30px, #000 190px, #000 2700px, transparent 2850px);
}
.title {
  height: 96px;
  padding-top: 6px;
  background: #35393d;
  color: #fff;
  font: 400 80px/94px "DejaVu Sans", Verdana, sans-serif;
  text-align: center;
}
.content {
  display: grid;
  grid-template-columns: 688px 2068px;
  column-gap: 62px;
  padding-left: 16px;
  color: #212529;
}
.sidebar { display: flex; flex-direction: column; padding-top: 17px; }
.sidebar h2 { padding-left: 11px; font-size: 64px; line-height: 77px; letter-spacing: -.044em; -webkit-text-stroke: 1px currentColor; }
.search { display: flex; margin: 14px 14px 49px 14px; height: 75px; }
.search input {
  width: 576px;
  border: 2px solid #ced4da;
  border-radius: 8px 0 0 8px;
  background: #fff;
}
.search button {
  flex: 1;
  display: grid;
  place-items: center;
  border: 0;
  border-radius: 8px;
  background: #2f7cf6;
}
.search svg { width: 32px; height: 32px; }
.clear, .city { border-radius: 16px; text-align: center; }
.clear {
  height: 116px;
  margin-bottom: 32px;
  border: 2px solid #bca9a8;
  background: #3c0b08;
  color: #fff;
  font-size: 32px;
  letter-spacing: -.02em;
}
.city {
  height: 104px;
  margin-bottom: 32px;
  padding-bottom: 1px;
  border: 2px solid #5f5858;
  background: #bca9a8;
  color: #000;
  font-size: 24px;
  letter-spacing: -.005em;
}
.forecasts { display: flex; flex-direction: column; gap: 17px; padding-top: 33px; }
.today {
  height: 632px;
  border: 2px solid #e2dfe8;
  border-radius: 16px;
  background: #282637;
  color: #fff;
  padding: 15px 0 0 15px;
}
.forecasts h3 { font-size: 56px; line-height: 70px; letter-spacing: -.048em; -webkit-text-stroke: .8px currentColor; }
.forecasts h4 { -webkit-text-stroke: .5px currentColor; }
.today h4 {
  display: flex;
  align-items: center;
  gap: 31px;
  height: 118px;
  font-size: 40px;
  letter-spacing: -.0285em;
}
.today h4 svg { width: 54px; height: 54px; margin-top: 8px; }
.today p {
  height: 100px;
  position: relative;
  top: -5px;
  padding-left: 10px;
  display: flex;
  align-items: center;
  gap: 7px;
  font-size: 32px;
  font-weight: 400;
  letter-spacing: -.015em;
}
.today .wind { letter-spacing: -.024em; }
.today .uv-row { letter-spacing: -.02em; }
.uv {
  width: 96px;
  height: 72px;
  display: grid;
  place-items: center;
  border-radius: 16px;
  background: #f2a53a;
  color: #000;
}
.week {
  height: 542px;
  border-radius: 16px;
  background: #b5d7e3;
  padding: 15px 0 0 16px;
}
.week h3 { letter-spacing: -.039em; }
.days {
  display: grid;
  grid-template-columns: 364px 362px 364px 356px 360px;
  gap: 32px;
  padding: 29px 0 0 16px;
}
.days article {
  height: 396px;
  border-radius: 16px;
  background: #282637;
  color: #d3d2d2;
  padding: 16px 0 0 15px;
  white-space: nowrap;
}
.days h4 { font-size: 40px; line-height: 48px; letter-spacing: -.023em; }
.days article:nth-child(n+3) h4 { letter-spacing: -.028em; }
.days svg { width: 72px; height: 48px; margin: 42px 0 10px 17px; }
.days .sunny { width: 54px; height: 54px; margin: 39px 0 7px 23px; }
.days p {
  height: 100px;
  padding-left: 11px;
  display: flex;
  align-items: center;
  font-size: 32px;
  font-weight: 400;
  letter-spacing: -.021em;
}
.days p:last-child { letter-spacing: -.014em; }

/* Dock */
.desktop {
  height: 132px;
  padding: 10px 76px 10px 77px;
  background:
    repeating-linear-gradient(155deg, rgba(255,255,255,.025) 0 2px, transparent 2px 7px),
    linear-gradient(90deg, #0b0d18, #090b12 30%, #0c0b10 60%, #1c1416 80%, #332528);
}
.dock {
  height: 112px;
  display: grid;
  grid-template-columns: repeat(18, 94px) 42px repeat(5, 94px) 42px repeat(5, 94px);
  padding-left: 3px;
  border: 2px solid #42444c;
  border-radius: 34px;
  background: linear-gradient(90deg, #1a1d28 0%, #191d25 45%, #212026 62%, #32262a 100%);
}
.app { display: flex; flex-direction: column; align-items: center; padding-top: 4px; }
.app svg { width: 94px; height: 94px; overflow: visible; }
.app.open::after { content: ""; width: 8px; height: 8px; border-radius: 50%; background: #a0a0a6; }
.petals { isolation: isolate; }
.petals rect { mix-blend-mode: multiply; }
.divider { width: 2px; height: 84px; margin: 12px auto 0; background: #56565c; }
```
